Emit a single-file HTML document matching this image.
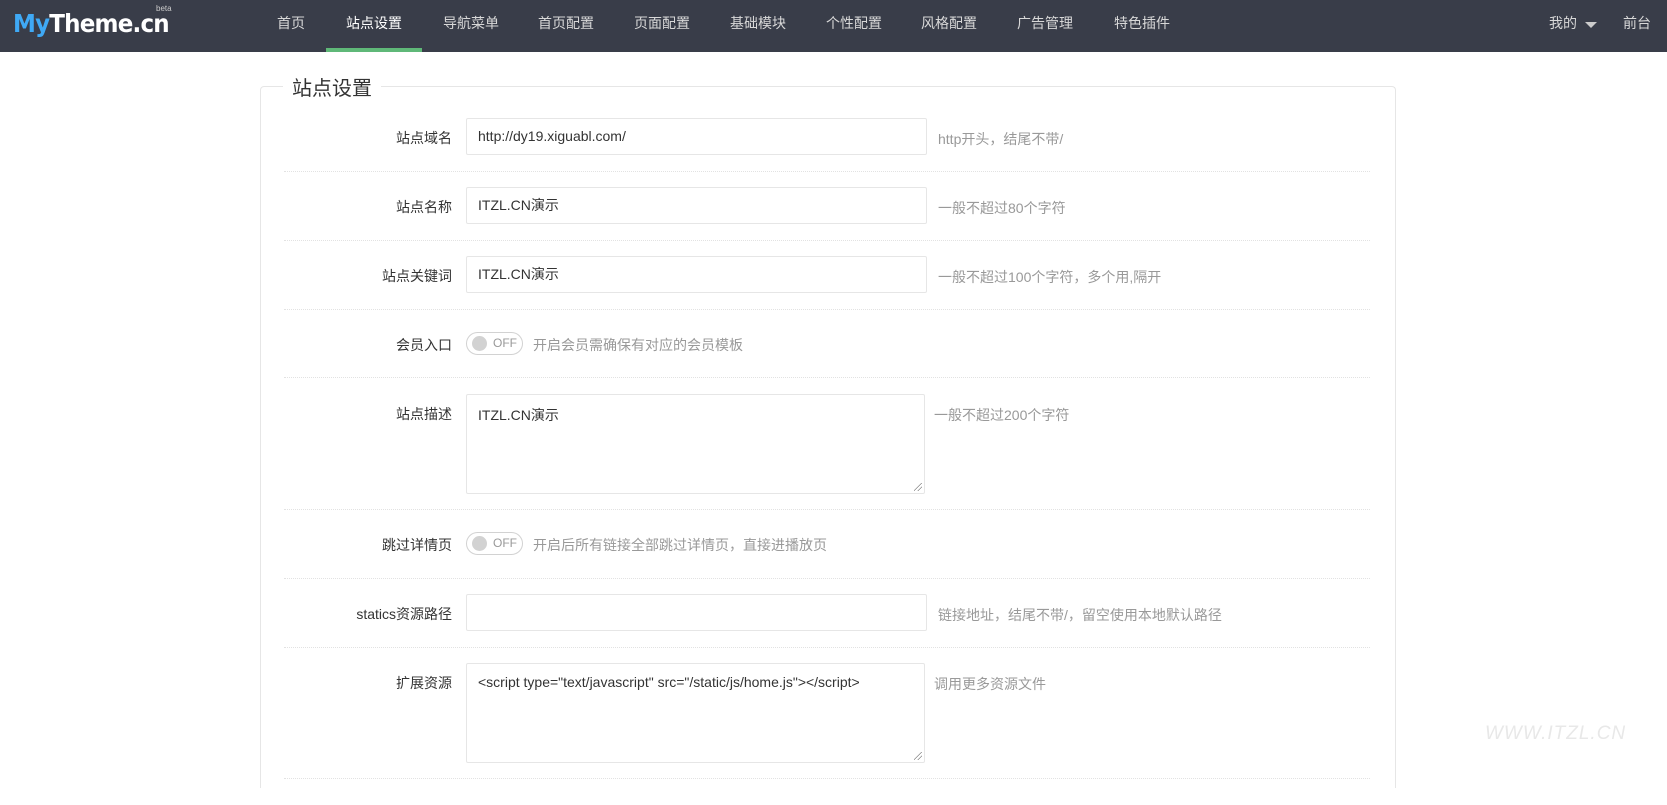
<!DOCTYPE html>
<html style="width:1667px;height:805px;overflow:hidden"><head><meta charset="utf-8"><style>
*{box-sizing:border-box;margin:0;padding:0}
body{width:1667px;height:805px;overflow:hidden;background:#fff;font-family:"Liberation Sans","Noto Sans CJK SC",sans-serif;font-size:14px;color:#333;position:relative}
.hd{position:absolute;left:0;top:0;width:1667px;height:52px;background:#393d49}
.logo{position:absolute;left:13px;top:10px;font-family:"DejaVu Sans","Liberation Sans",sans-serif;font-weight:bold;font-size:23px;color:#fff;letter-spacing:-0.8px;transform:scaleY(1.1);transform-origin:top left}
.logo b{color:#3fa9f5}
.beta{position:absolute;left:156px;top:4px;font-size:8px;color:#ccc;font-family:"Liberation Sans",sans-serif}
.nav{position:absolute;top:0;height:52px;line-height:46px;color:#d8d8d8;font-size:14px;text-align:center;width:96px}
.nav.on{color:#fff;border-bottom:4px solid #5fb878}
.fs{position:absolute;left:260px;top:86px;width:1136px;height:702px;border:1px solid #e6e6e6;border-bottom:none;border-radius:4px 4px 0 0}
.lg{position:absolute;left:283px;top:72px;background:#fff;padding:0 9px;font-size:20px;color:#333}
.lab{position:absolute;width:200px;left:252px;text-align:right;font-size:14px;color:#333}
.in{position:absolute;left:466px;width:461px;height:37px;border:1px solid #e6e6e6;border-radius:2px;padding-left:11px;line-height:35px;font-size:14px;color:#333}
.ta{position:absolute;left:466px;width:459px;height:100px;border:1px solid #e6e6e6;border-radius:2px;padding:10px 11px;font-size:14px;color:#333}
.ta:after{content:"";position:absolute;right:2px;bottom:2px;width:8px;height:8px;background:linear-gradient(135deg,transparent 45%,#888 45%,#888 52%,transparent 52%,transparent 70%,#888 70%,#888 77%,transparent 77%)}
.hint{position:absolute;font-size:14px;color:#999}
.dv{position:absolute;left:284px;width:1086px;border-top:1px dotted #e2e2e2}
.tg{position:absolute;left:466px;width:57px;height:23px;border:1px solid #d2d2d2;border-radius:12px}
.tg i{position:absolute;left:5px;top:3px;width:15px;height:15px;border-radius:50%;background:#d2d2d2}
.tg span{position:absolute;left:26px;top:3px;font-size:12px;color:#999;line-height:15px}
.wm{position:absolute;left:1485px;top:723px;font-size:19px;font-style:italic;color:#e8e8e8;letter-spacing:1px}
</style></head><body>
<div class="hd">
<div class="logo"><b>My</b>Theme.cn</div><div class="beta">beta</div>
<div class="nav" style="left:243px">首页</div>
<div class="nav on" style="left:326px">站点设置</div>
<div class="nav" style="left:423px">导航菜单</div>
<div class="nav" style="left:518px">首页配置</div>
<div class="nav" style="left:614px">页面配置</div>
<div class="nav" style="left:710px">基础模块</div>
<div class="nav" style="left:806px">个性配置</div>
<div class="nav" style="left:901px">风格配置</div>
<div class="nav" style="left:997px">广告管理</div>
<div class="nav" style="left:1094px">特色插件</div>
<div class="nav" style="left:1548px;width:30px">我的</div>
<div style="position:absolute;left:1585px;top:22px;border-left:6px solid transparent;border-right:6px solid transparent;border-top:6px solid #ccc"></div>
<div class="nav" style="left:1620px;width:34px">前台</div>
</div>
<div class="fs"></div>
<div class="lg">站点设置</div>

<div class="lab" style="top:128px">站点域名</div>
<div class="in" style="top:118px">http://dy19.xiguabl.com/</div>
<div class="hint" style="left:938px;top:129px">http开头，结尾不带/</div>
<div class="dv" style="top:171px"></div>

<div class="lab" style="top:197px">站点名称</div>
<div class="in" style="top:187px">ITZL.CN演示</div>
<div class="hint" style="left:938px;top:198px">一般不超过80个字符</div>
<div class="dv" style="top:240px"></div>

<div class="lab" style="top:266px">站点关键词</div>
<div class="in" style="top:256px">ITZL.CN演示</div>
<div class="hint" style="left:938px;top:267px">一般不超过100个字符，多个用,隔开</div>
<div class="dv" style="top:309px"></div>

<div class="lab" style="top:335px">会员入口</div>
<div class="tg" style="top:332px"><i></i><span>OFF</span></div>
<div class="hint" style="left:533px;top:335px">开启会员需确保有对应的会员模板</div>
<div class="dv" style="top:377px"></div>

<div class="lab" style="top:404px">站点描述</div>
<div class="ta" style="top:394px">ITZL.CN演示</div>
<div class="hint" style="left:934px;top:405px">一般不超过200个字符</div>
<div class="dv" style="top:509px"></div>

<div class="lab" style="top:535px">跳过详情页</div>
<div class="tg" style="top:532px"><i></i><span>OFF</span></div>
<div class="hint" style="left:533px;top:535px">开启后所有链接全部跳过详情页，直接进播放页</div>
<div class="dv" style="top:578px"></div>

<div class="lab" style="top:604px">statics资源路径</div>
<div class="in" style="top:594px"></div>
<div class="hint" style="left:938px;top:605px">链接地址，结尾不带/，留空使用本地默认路径</div>
<div class="dv" style="top:647px"></div>

<div class="lab" style="top:673px">扩展资源</div>
<div class="ta" style="top:663px">&lt;script type="text/javascript" src="/static/js/home.js"&gt;&lt;/script&gt;</div>
<div class="hint" style="left:934px;top:674px">调用更多资源文件</div>
<div class="dv" style="top:778px"></div>

<div class="wm">WWW.ITZL.CN</div>
</body></html>
